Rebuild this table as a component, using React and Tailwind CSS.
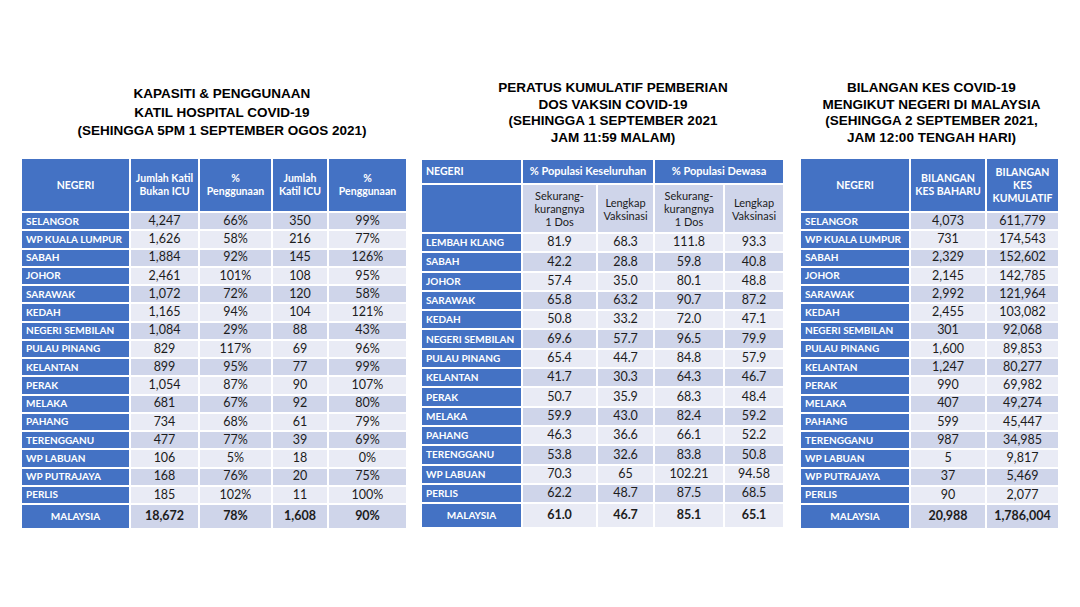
import React from "react";

const BLUE = "bg-[#4472c4]";
const DARK = "bg-[#cfd5ea]";
const LIGHT = "bg-[#e9ebf5]";

const katil = [
  ["SELANGOR", "4,247", "66%", "350", "99%"],
  ["WP KUALA LUMPUR", "1,626", "58%", "216", "77%"],
  ["SABAH", "1,884", "92%", "145", "126%"],
  ["JOHOR", "2,461", "101%", "108", "95%"],
  ["SARAWAK", "1,072", "72%", "120", "58%"],
  ["KEDAH", "1,165", "94%", "104", "121%"],
  ["NEGERI SEMBILAN", "1,084", "29%", "88", "43%"],
  ["PULAU PINANG", "829", "117%", "69", "96%"],
  ["KELANTAN", "899", "95%", "77", "99%"],
  ["PERAK", "1,054", "87%", "90", "107%"],
  ["MELAKA", "681", "67%", "92", "80%"],
  ["PAHANG", "734", "68%", "61", "79%"],
  ["TERENGGANU", "477", "77%", "39", "69%"],
  ["WP LABUAN", "106", "5%", "18", "0%"],
  ["WP PUTRAJAYA", "168", "76%", "20", "75%"],
  ["PERLIS", "185", "102%", "11", "100%"],
];

const vaksin = [
  ["LEMBAH KLANG", "81.9", "68.3", "111.8", "93.3"],
  ["SABAH", "42.2", "28.8", "59.8", "40.8"],
  ["JOHOR", "57.4", "35.0", "80.1", "48.8"],
  ["SARAWAK", "65.8", "63.2", "90.7", "87.2"],
  ["KEDAH", "50.8", "33.2", "72.0", "47.1"],
  ["NEGERI SEMBILAN", "69.6", "57.7", "96.5", "79.9"],
  ["PULAU PINANG", "65.4", "44.7", "84.8", "57.9"],
  ["KELANTAN", "41.7", "30.3", "64.3", "46.7"],
  ["PERAK", "50.7", "35.9", "68.3", "48.4"],
  ["MELAKA", "59.9", "43.0", "82.4", "59.2"],
  ["PAHANG", "46.3", "36.6", "66.1", "52.2"],
  ["TERENGGANU", "53.8", "32.6", "83.8", "50.8"],
  ["WP LABUAN", "70.3", "65", "102.21", "94.58"],
  ["PERLIS", "62.2", "48.7", "87.5", "68.5"],
];

const kes = [
  ["SELANGOR", "4,073", "611,779"],
  ["WP KUALA LUMPUR", "731", "174,543"],
  ["SABAH", "2,329", "152,602"],
  ["JOHOR", "2,145", "142,785"],
  ["SARAWAK", "2,992", "121,964"],
  ["KEDAH", "2,455", "103,082"],
  ["NEGERI SEMBILAN", "301", "92,068"],
  ["PULAU PINANG", "1,600", "89,853"],
  ["KELANTAN", "1,247", "80,277"],
  ["PERAK", "990", "69,982"],
  ["MELAKA", "407", "49,274"],
  ["PAHANG", "599", "45,447"],
  ["TERENGGANU", "987", "34,985"],
  ["WP LABUAN", "5", "9,817"],
  ["WP PUTRAJAYA", "37", "5,469"],
  ["PERLIS", "90", "2,077"],
];

const Title = ({ lines, className }) => (
  <div
    className={`h-[78px] flex flex-col items-center justify-center font-['Liberation_Sans',Arial,sans-serif] font-bold text-[13.5px] text-black text-center ${className}`}
  >
    {lines.map((l) => (
      <div key={l}>{l}</div>
    ))}
  </div>
);

const Label = ({ children, center }) => (
  <div
    className={`${BLUE} flex items-center ${
      center ? "justify-center" : "pl-[4px]"
    } text-white font-bold text-[10px] whitespace-nowrap`}
  >
    {children}
  </div>
);

const Cell = ({ children, bg, bold }) => (
  <div
    className={`${bg} flex items-center justify-center text-[12.5px] text-[#1c1c1c] ${
      bold ? "font-bold" : ""
    }`}
  >
    {children}
  </div>
);

const Head = ({ children, left }) => (
  <div
    className={`${BLUE} flex flex-col justify-center ${
      left ? "items-start pl-[4px]" : "items-center"
    } text-white font-bold text-[10.5px] leading-[13px] text-center`}
  >
    {children}
  </div>
);

export default function App() {
  return (
    <div className="w-[1080px] h-[607px] bg-white font-['Lato','Open_Sans',sans-serif] flex gap-[16px] px-[22px] pt-[74px]">
      {/* katil hospital */}
      <div className="w-[384px] flex flex-col">
        <Title
          className="pl-[16px] leading-[18.5px]"
          lines={[
            "KAPASITI & PENGGUNAAN",
            "KATIL HOSPITAL COVID-19",
            "(SEHINGGA 5PM 1 SEPTEMBER OGOS 2021)",
          ]}
        />
        <div className="mt-[7px] grid grid-cols-[107px_67px_71px_54px_77px] grid-rows-[52px_repeat(16,16.25px)_23px] gap-[2px] bg-white">
          <Head>NEGERI</Head>
          <Head>
            <span>Jumlah Katil</span>
            <span>Bukan ICU</span>
          </Head>
          <Head>
            <span>%</span>
            <span>Penggunaan</span>
          </Head>
          <Head>
            <span>Jumlah</span>
            <span>Katil ICU</span>
          </Head>
          <Head>
            <span>%</span>
            <span>Penggunaan</span>
          </Head>
          {katil.map((r, i) => (
            <React.Fragment key={r[0]}>
              <Label>{r[0]}</Label>
              {r.slice(1).map((v, j) => (
                <Cell key={j} bg={i % 2 === 0 ? DARK : LIGHT}>
                  {v}
                </Cell>
              ))}
            </React.Fragment>
          ))}
          <Label center>MALAYSIA</Label>
          <Cell bg={DARK} bold>18,672</Cell>
          <Cell bg={DARK} bold>78%</Cell>
          <Cell bg={DARK} bold>1,608</Cell>
          <Cell bg={DARK} bold>90%</Cell>
        </div>
      </div>

      {/* vaksin */}
      <div className="w-[362px] flex flex-col">
        <Title
          className="pl-[20px] leading-[16.5px]"
          lines={[
            "PERATUS KUMULATIF PEMBERIAN",
            "DOS VAKSIN COVID-19",
            "(SEHINGGA 1 SEPTEMBER 2021",
            "JAM 11:59 MALAM)",
          ]}
        />
        <div className="mt-[8px] grid grid-cols-[99px_73px_55px_68px_58px] grid-rows-[23px_47px_repeat(14,17.3px)_23px] gap-[2px] bg-white">
          <Head left>NEGERI</Head>
          <div className={`${BLUE} col-span-2 flex items-center justify-center text-white font-bold text-[11px]`}>
            % Populasi Keseluruhan
          </div>
          <div className={`${BLUE} col-span-2 flex items-center justify-center text-white font-bold text-[11px]`}>
            % Populasi Dewasa
          </div>
          <div className={BLUE} />
          {[
            ["Sekurang-", "kurangnya", "1 Dos"],
            ["Lengkap", "Vaksinasi"],
            ["Sekurang-", "kurangnya", "1 Dos"],
            ["Lengkap", "Vaksinasi"],
          ].map((lines, k) => (
            <div
              key={k}
              className={`${DARK} flex flex-col items-center justify-center text-[11px] leading-[13px] text-[#1c1c1c]`}
            >
              {lines.map((l) => (
                <span key={l}>{l}</span>
              ))}
            </div>
          ))}
          {vaksin.map((r, i) => (
            <React.Fragment key={r[0]}>
              <Label>{r[0]}</Label>
              {r.slice(1).map((v, j) => (
                <Cell key={j} bg={i % 2 === 0 ? LIGHT : DARK}>
                  {v}
                </Cell>
              ))}
            </React.Fragment>
          ))}
          <Label center>MALAYSIA</Label>
          <Cell bg={LIGHT} bold>61.0</Cell>
          <Cell bg={LIGHT} bold>46.7</Cell>
          <Cell bg={LIGHT} bold>85.1</Cell>
          <Cell bg={LIGHT} bold>65.1</Cell>
        </div>
      </div>

      {/* kes */}
      <div className="w-[257px] flex flex-col ml-[1px]">
        <Title
          className="pl-[4px] leading-[16.5px]"
          lines={[
            "BILANGAN KES COVID-19",
            "MENGIKUT NEGERI DI MALAYSIA",
            "(SEHINGGA 2 SEPTEMBER 2021,",
            "JAM 12:00 TENGAH HARI)",
          ]}
        />
        <div className="mt-[7px] grid grid-cols-[108px_74px_71px] grid-rows-[52px_repeat(16,16.25px)_23px] gap-[2px] bg-white">
          <Head>NEGERI</Head>
          <Head>
            <span>BILANGAN</span>
            <span>KES BAHARU</span>
          </Head>
          <Head>
            <span>BILANGAN</span>
            <span>KES</span>
            <span>KUMULATIF</span>
          </Head>
          {kes.map((r, i) => (
            <React.Fragment key={r[0]}>
              <Label>{r[0]}</Label>
              {r.slice(1).map((v, j) => (
                <Cell key={j} bg={i % 2 === 0 ? DARK : LIGHT}>
                  {v}
                </Cell>
              ))}
            </React.Fragment>
          ))}
          <Label center>MALAYSIA</Label>
          <Cell bg={DARK} bold>20,988</Cell>
          <Cell bg={DARK} bold>1,786,004</Cell>
        </div>
      </div>
    </div>
  );
}
